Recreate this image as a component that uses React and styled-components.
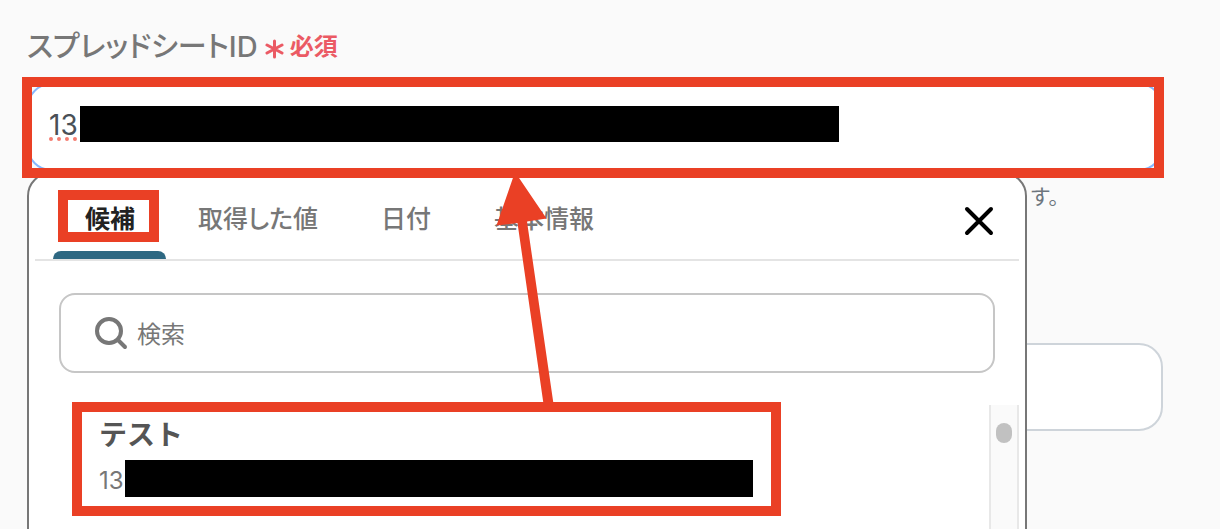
import React, { useState } from "react";
import styled, { createGlobalStyle } from "styled-components";

const RED = "#ea4025";

const GlobalStyle = createGlobalStyle`
  *, *::before, *::after { box-sizing: border-box; }
  body {
    margin: 0;
    background: #fafafa;
    font-family: Inter, "Noto Sans CJK JP", sans-serif;
    color: #777;
  }
  button, input { font: inherit; color: inherit; }
`;

const Page = styled.main`
  position: relative;
  height: 100vh;
  overflow: hidden;
  padding: 24px 57px 0 27px;
`;

const Label = styled.label`
  display: flex;
  align-items: center;
  height: 40px;
  margin-bottom: 19px;
  font-size: 29px;
  font-weight: 500;
  font-feature-settings: "palt";
`;

const Required = styled.span`
  display: flex;
  align-items: center;
  gap: 6px;
  margin-left: 7px;
  padding-top: 6px;
  color: #eb5a64;
  font-size: 24px;
  font-weight: 700;
  line-height: 36px;
  font-feature-settings: normal;

  svg { margin-top: 4px; }
`;

const Field = styled.div`
  position: relative;
`;

const TextInput = styled.input`
  display: block;
  width: 100%;
  height: 88px;
  padding: 0 20px 4px;
  border: 2px solid ${(p) => (p.$focused ? "#86b7fe" : "#ced4da")};
  border-radius: 24px;
  background: #fff;
  color: #495057;
  font-size: 28px;
  outline: none;
`;

const SpellMark = styled.span`
  position: absolute;
  top: 54px;
  left: 22px;
  width: 28px;
  border-bottom: 4px dotted #f47c70;
`;

const FieldRedaction = styled.span`
  position: absolute;
  top: 23px;
  left: 53px;
  width: calc(100% - 377px);
  height: 36px;
  background: #000;
`;

const Highlight = styled.span`
  position: absolute;
  z-index: 3;
  inset: ${(p) => p.$inset};
  border: 10px solid ${RED};
  pointer-events: none;
`;

const Help = styled.p`
  height: 32px;
  margin: 10px 0 130px;
  padding-left: calc(88% + 3px);
  color: #6c757d;
  font-size: 21px;
  line-height: 32px;
`;

const Popup = styled.section`
  position: absolute;
  z-index: 1;
  top: calc(100% + 1px);
  left: 0;
  width: 88%;
  border: 2px solid #777;
  border-radius: 24px;
  background: #fff;
`;

const PopupHeader = styled.header`
  display: flex;
  align-items: center;
  justify-content: space-between;
  height: 87px;
  margin: 0 6px;
  padding: 0 24px 0 18px;
  border-bottom: 2px solid #e4e4e4;
`;

const TabList = styled.div`
  display: flex;
  align-self: stretch;
`;

const Tab = styled.button`
  position: relative;
  padding: 0 31px 0 32px;
  border: 0;
  background: none;
  color: ${(p) => (p.$active ? "#222" : "#777")};
  font-size: 25px;
  font-weight: ${(p) => (p.$active ? 700 : 500)};
  font-feature-settings: "palt";

  &::after {
    content: "";
    position: absolute;
    inset: auto 0 0;
    height: 8px;
    border-radius: 8px 8px 0 0;
    background: ${(p) => (p.$active ? "#2e6882" : "transparent")};
  }
`;

const CloseButton = styled.button`
  display: flex;
  padding: 8px 0 0;
  border: 0;
  background: none;
  color: #000;
`;

const SearchBox = styled.label`
  display: flex;
  align-items: center;
  gap: 8px;
  height: 80px;
  margin: 32px 30px;
  padding: 0 32px;
  border: 2px solid #c6c6c6;
  border-radius: 16px;
`;

const SearchInput = styled.input`
  flex: 1;
  min-width: 0;
  padding: 2px 0 0;
  border: 0;
  outline: none;
  background: none;
  font-size: 24px;

  &::placeholder { color: #777; opacity: 1; }
`;

const Results = styled.div`
  display: flex;
  justify-content: space-between;
  height: 200px;
  margin-right: 6px;
  padding-left: 70px;
`;

const Result = styled.button`
  position: relative;
  display: flex;
  flex-direction: column;
  justify-content: flex-start;
  width: 73%;
  height: 108px;
  padding: 10px 0 0;
  border: 0;
  background: none;
  text-align: left;
`;

const ResultName = styled.span`
  color: #555;
  font-size: 28px;
  font-weight: 700;
  line-height: 40px;
`;

const ResultId = styled.span`
  display: flex;
  align-self: stretch;
  height: 37px;
  margin-top: 5px;
  font-size: 24px;
  line-height: 42px;
`;

const ResultRedaction = styled.span`
  flex: 1;
  margin-right: 17px;
  background: #000;
`;

const IdPrefix = styled.span`
  width: 26px;
`;

const Scrollbar = styled.div`
  width: 30px;
  padding: 18px 5px;
  border: solid #e8e8e8;
  border-width: 0 2px;
  background: #fafafa;
`;

const Thumb = styled.div`
  height: 20px;
  border-radius: 8px;
  background: #c1c1c1;
`;

const Arrow = styled.svg`
  position: absolute;
  z-index: 2;
  top: 174px;
  left: 494px;
`;

const TABS = ["候補", "取得した値", "日付", "基本情報"];

export default function App() {
  const [active, setActive] = useState(TABS[0]);
  const [sheetId, setSheetId] = useState("13");

  return (
    <>
      <GlobalStyle />
      <Page>
        <Label htmlFor="sheet-id">
          スプレッドシートID
          <Required>
            <svg width="19" height="20" viewBox="0 0 19 20" fill="none" stroke="currentColor" strokeWidth="3" strokeLinecap="round" aria-hidden="true">
              <path d="M9.5 2v16M2 6l15 8M17 6L2 14" />
            </svg>
            必須
          </Required>
        </Label>
        <Field>
          <TextInput id="sheet-id" $focused value={sheetId} onChange={(e) => setSheetId(e.target.value)} />
          <SpellMark />
          <FieldRedaction />
          <Highlight $inset="-6px -1px -7px -5px" />
          <Popup>
            <PopupHeader>
              <TabList role="tablist">
                {TABS.map((name) => (
                  <Tab key={name} type="button" role="tab" aria-selected={name === active} $active={name === active} onClick={() => setActive(name)}>
                    {name}
                    {name === TABS[0] && <Highlight $inset="16px 7px 17px 5px" />}
                  </Tab>
                ))}
              </TabList>
              <CloseButton type="button" aria-label="閉じる">
                <svg width="32" height="32" viewBox="0 0 32 32" fill="none" stroke="currentColor" strokeWidth="4" strokeLinecap="round" aria-hidden="true">
                  <path d="M4 4l24 24M28 4L4 28" />
                </svg>
              </CloseButton>
            </PopupHeader>
            <SearchBox>
              <svg width="36" height="36" viewBox="0 0 36 36" fill="none" stroke="currentColor" strokeWidth="4" strokeLinecap="round" aria-hidden="true">
                <circle cx="16" cy="16" r="12" />
                <path d="M25 25l7 7" />
              </svg>
              <SearchInput type="text" placeholder="検索" aria-label="検索" />
            </SearchBox>
            <Results>
              <Result type="button">
                <ResultName>テスト</ResultName>
                <ResultId>
                  <IdPrefix>13</IdPrefix>
                  <ResultRedaction />
                </ResultId>
                <Highlight $inset="-3px -11px -3px -27px" />
              </Result>
              <Scrollbar>
                <Thumb />
              </Scrollbar>
            </Results>
          </Popup>
        </Field>
        <Help>す。</Help>
        <TextInput aria-label="値" />
        <Arrow width="60" height="234" viewBox="494 174 60 234" fill={RED} aria-hidden="true">
          <path d="M515 172L546.500 218.500L527 221.500L553.500 404H543.500L517.500 223L496.500 225.500Z" />
        </Arrow>
      </Page>
    </>
  );
}
